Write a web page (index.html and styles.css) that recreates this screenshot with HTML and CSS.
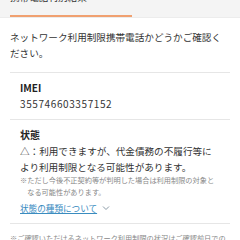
FILE: index.html
```html
<!DOCTYPE html>
<html lang="ja">
<head>
<meta charset="utf-8">
<link rel="stylesheet" href="styles.css">
</head>
<body>
<div class="tabs">
  <div class="tab">携帯電話判別結果</div>
</div>
<p class="intro">ネットワーク利用制限携帯電話かどうかご確認ください。</p>
<div class="card">
  <div class="row">
    <div class="label">IMEI</div>
    <div class="imei">355746603357152</div>
  </div>
  <div class="row">
    <div class="label">状態</div>
    <div class="status">△：利用できますが、代金債務の不履行等により利用制限となる可能性があります。</div>
    <div class="small">※ただし今後不正契約等が判明した場合は利用制限の対象となる可能性があります。</div>
    <div class="more"><a class="link" href="#">状態の種類について</a><svg class="chev" width="8" height="6" viewBox="0 0 8 6"><path d="M1 1.5 L4 4.5 L7 1.5" fill="none" stroke="#8a9aa6" stroke-width="1"/></svg></div>
  </div>
</div>
<p class="note">※ご確認いただけるネットワーク利用制限の状況はご確認前日での時点の情報です。</p>
</body>
</html>
```
FILE: styles.css
```css
html, body {
  margin: 0;
  padding: 0;
  background: #ffffff;
  width: 240px;
  height: 240px;
  overflow: hidden;
  font-family: "Noto Sans CJK JP", "Noto Sans", sans-serif;
  color: #333333;
}
.tabs {
  background: #f4f4f4;
  margin-top: -11px;
  padding: 0 10px;
  height: 29px;
  box-sizing: border-box;
  border-bottom: 1px solid #ececec;
}
.tab {
  width: 122px;
  font-size: 9.6px;
  line-height: 16px;
  padding-bottom: 10px;
  border-bottom: 2px solid #f0a070;
  color: #333;
}
.intro {
  margin: 0;
  padding: 11px 10px 0;
  font-size: 9.6px;
  line-height: 16px;
  color: #333;
}
.card {
  margin: 11px 10px 0;
  border-top: 1px solid #e6e6e6;
}
.row {
  padding: 7px 10px 7px;
  border-bottom: 1px solid #e6e6e6;
}
.label {
  font-size: 10px;
  font-weight: 700;
  line-height: 16px;
  color: #222;
}
.imei {
  font-size: 10px;
  line-height: 16px;
  letter-spacing: 0.6px;
  color: #333;
}
.status {
  font-size: 9.6px;
  line-height: 16px;
  color: #333;
}
.small {
  font-size: 7.2px;
  line-height: 12px;
  color: #888;
  padding-left: 1em;
  text-indent: -1em;
  margin-top: -1px;
}
.more {
  display: flex;
  align-items: center;
  gap: 5px;
  margin-top: 3px;
  line-height: 14px;
  padding-bottom: 1px;
}
.link {
  font-size: 8.6px;
  color: #3a8cbf;
  text-decoration: underline;
}
.chev {
  display: block;
}
.note {
  margin: 8px 0 0;
  padding: 0 10px;
  font-size: 7.2px;
  line-height: 12px;
  color: #888;
}
```
